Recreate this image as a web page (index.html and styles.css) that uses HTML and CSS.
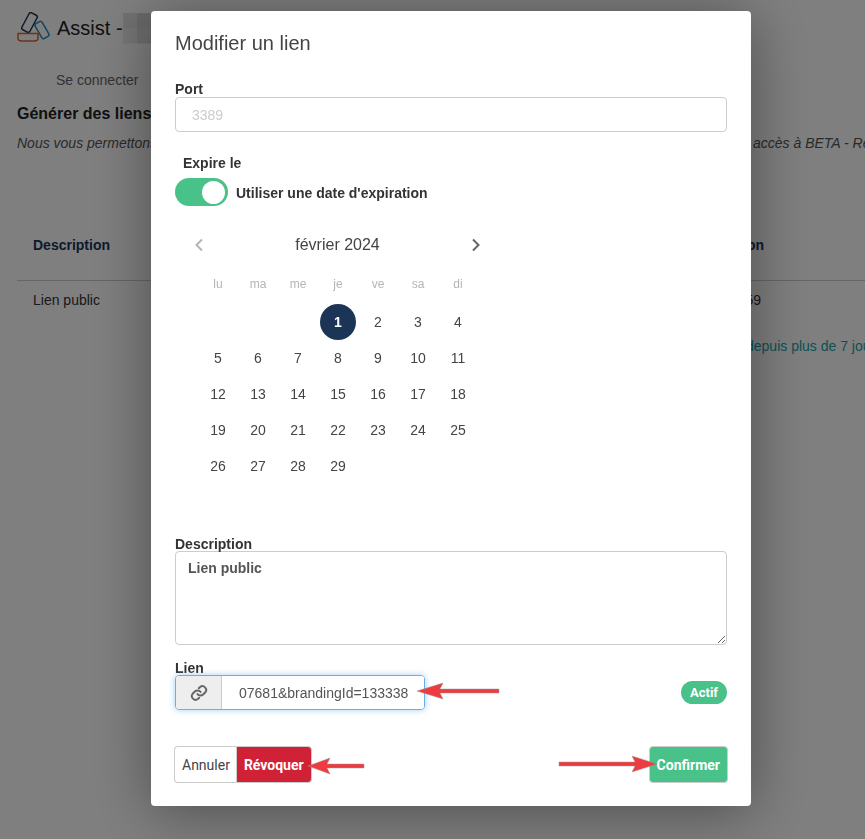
FILE: index.html
```html
<!DOCTYPE html>
<html lang="fr">
<head>
    <meta charset="UTF-8">
    <meta name="viewport" content="width=device-width, initial-scale=1.0">
    <title>Modifier un lien</title>
    <link rel="stylesheet" href="styles.css">
</head>
<body>
    <div class="page">
        <header class="brand">
            <svg class="logo" width="38" height="32" viewBox="0 0 38 32" fill="none">
                <rect x="8" y="1" width="9" height="19" rx="2" transform="rotate(28 12.5 10.5)" stroke="#1c3557" stroke-width="1.5"/>
                <rect x="21" y="9.5" width="8" height="17" rx="2" transform="rotate(-30 25 18)" stroke="#1a8fc4" stroke-width="1.5"/>
                <path d="M0.5 21.5H21.5M1 21.5V26C1 28 2.5 29 4.5 29H17.5C19.5 29 21 28 21 26V21.5" stroke="#d9662b" stroke-width="1.5"/>
            </svg>
            <span class="brand-name">Assist -</span>
            <span class="blur-blocks"></span>
        </header>
        <nav class="nav"><a>Se connecter</a></nav>
        <h1 class="page-title">Générer des liens</h1>
        <p class="page-intro"><span>Nous vous permettons</span><span>accès à BETA - Réservé</span></p>
        <div class="link-table">
            <div class="link-head">
                <span>Description</span>
                <span>Expiration</span>
            </div>
            <div class="link-row">
                <span>Lien public</span>
                <span class="link-date">16:59</span>
            </div>
            <div class="link-note">depuis plus de 7 jours</div>
        </div>
    </div>

    <div class="overlay">
        <div class="modal">
            <h2 class="modal-title">Modifier un lien</h2>

            <label class="field-label port-label" for="port">Port</label>
            <input class="text-input" type="text" id="port" placeholder="3389">

            <div class="expire-label">Expire le</div>
            <div class="switch-row">
                <span class="switch"><span class="switch-knob"></span></span>
                <span class="switch-text">Utiliser une date d'expiration</span>
            </div>

            <div class="calendar">
                <div class="cal-head">
                    <svg class="cal-prev" width="10" height="14" viewBox="0 0 10 14" fill="none"><path d="M8 1.5L2.5 7L8 12.5" stroke="#b4b4b4" stroke-width="2"/></svg>
                    <span class="cal-month">février 2024</span>
                    <svg class="cal-next" width="10" height="14" viewBox="0 0 10 14" fill="none"><path d="M2 1.5L7.5 7L2 12.5" stroke="#666" stroke-width="2"/></svg>
                </div>
                <div class="cal-grid cal-days">
                    <span>lu</span><span>ma</span><span>me</span><span>je</span><span>ve</span><span>sa</span><span>di</span>
                </div>
                <div class="cal-grid cal-dates">
                    <span></span><span></span><span></span><span class="is-selected">1</span><span>2</span><span>3</span><span>4</span>
                    <span>5</span><span>6</span><span>7</span><span>8</span><span>9</span><span>10</span><span>11</span>
                    <span>12</span><span>13</span><span>14</span><span>15</span><span>16</span><span>17</span><span>18</span>
                    <span>19</span><span>20</span><span>21</span><span>22</span><span>23</span><span>24</span><span>25</span>
                    <span>26</span><span>27</span><span>28</span><span>29</span>
                </div>
            </div>

            <label class="field-label desc-label" for="description">Description</label>
            <textarea class="text-area" id="description">Lien public</textarea>

            <label class="field-label link-label" for="link">Lien</label>
            <div class="link-line">
                <div class="input-group">
                    <span class="addon">
                        <svg width="18" height="18" viewBox="0 0 24 24" fill="none" stroke="#666" stroke-width="2.6" stroke-linecap="round">
                            <path d="M10 13.5a5 5 0 0 0 7.5.5l3-3a5 5 0 0 0-7-7l-1.7 1.7"/>
                            <path d="M14 10.5a5 5 0 0 0-7.5-.5l-3 3a5 5 0 0 0 7 7l1.7-1.7"/>
                        </svg>
                    </span>
                    <input class="link-input" type="text" id="link" value="07681&amp;brandingId=133338">
                </div>
                <span class="badge">Actif</span>
            </div>

            <div class="modal-actions">
                <div class="btn-group">
                    <button class="btn btn-cancel" type="button">Annuler</button>
                    <button class="btn btn-revoke" type="button">Révoquer</button>
                </div>
                <button class="btn btn-confirm" type="button">Confirmer</button>
            </div>

            <!-- annotations drawn on top of the screenshot -->
            <svg class="arrow arrow-link" width="84" height="20" viewBox="0 0 84 20"><path d="M83 8H24L27 2L1 10L27 18L24 12H83Z" fill="#ee3b3f" stroke="#999" stroke-width=".5"/></svg>
            <svg class="arrow arrow-revoke" width="58" height="20" viewBox="0 0 58 20"><path d="M57 8H20L23 2L1 10L23 18L20 12H57Z" fill="#ee3b3f" stroke="#999" stroke-width=".5"/></svg>
            <svg class="arrow arrow-confirm" width="100" height="20" viewBox="0 0 100 20"><path d="M1 8H77L74 2L99 10L74 18L77 12H1Z" fill="#ee3b3f" stroke="#999" stroke-width=".5"/></svg>
        </div>
    </div>
</body>
</html>
```

FILE: styles.css
```css
html, body {
    height: 100%;
}

body {
    margin: 0;
    font-family: "Liberation Sans", Arial, sans-serif;
    font-size: 14px;
    color: #333;
    background: #fff;
    overflow: hidden;
}

.page {
    padding: 12px 0 0 17px;
}

.brand {
    display: flex;
    align-items: center;
    height: 32px;
}

.logo {
    margin-right: 2px;
}

.brand-name {
    font-size: 20px;
    color: #222;
}

.blur-blocks {
    width: 28px;
    height: 31px;
    background:
        linear-gradient(90deg, #e4e4e4 50%, #d4d4d4 50%) top / 100% 50% no-repeat,
        linear-gradient(90deg, #ececec 50%, #dcdcdc 50%) bottom / 100% 50% no-repeat;
}

.nav {
    padding: 28px 0 0 39px;
    color: #666;
    line-height: 16px;
}

.page-title {
    margin: 17px 0 0;
    font-size: 16px;
    line-height: 18px;
    color: #222;
}

.page-intro {
    display: grid;
    grid-template-columns: 736px 1fr;
    margin: 12px 0 0;
    line-height: 16px;
    font-style: italic;
    white-space: nowrap;
    color: #555;
}

.link-table {
    margin-top: 86px;
    width: 848px;
}

.link-head,
.link-row {
    display: flex;
    justify-content: space-between;
    padding: 0 101px 0 16px;
}

.link-head {
    height: 43px;
    font-weight: bold;
    color: #1c3557;
    border-bottom: 1px solid #ccc;
}

.link-row {
    padding-top: 11px;
    line-height: 16px;
    color: #333;
}

.link-date {
    padding-right: 3px;
}

.link-note {
    margin: 30px 0 0 729px;
    line-height: 16px;
    white-space: nowrap;
    color: #17a2a8;
}

.overlay {
    position: fixed;
    top: 0;
    right: 0;
    bottom: 0;
    left: 0;
    background: rgba(0, 0, 0, 0.5);
}

.modal {
    position: absolute;
    top: 11px;
    left: 151px;
    width: 600px;
    height: 795px;
    box-sizing: border-box;
    padding: 20px 24px 0;
    background: #fff;
    border-radius: 4px;
    box-shadow: 0 5px 60px rgba(0, 0, 0, 0.4);
}

.modal-title {
    margin: 0;
    font-size: 20px;
    font-weight: 400;
    line-height: 24px;
    color: #444;
}

.field-label {
    display: block;
    margin-top: 27px;
    font-size: 14px;
    font-weight: 700;
    line-height: 16px;
    color: #333;
}

.port-label {
    line-height: 15px;
}

.text-input {
    display: block;
    box-sizing: border-box;
    width: 552px;
    height: 35px;
    padding: 0 16px;
    border: 1px solid #ccc;
    border-radius: 4px;
    font-family: "Liberation Sans", Arial, sans-serif;
    font-size: 14px;
    outline: none;
}

.text-input::placeholder {
    color: #ccc;
}

.expire-label {
    margin: 23px 0 0 8px;
    font-weight: 700;
    line-height: 16px;
}

.switch-row {
    display: flex;
    align-items: center;
    gap: 8px;
    margin-top: 7px;
}

.switch {
    display: flex;
    justify-content: flex-end;
    align-items: center;
    box-sizing: border-box;
    width: 53px;
    height: 28px;
    padding-right: 3px;
    background: #48c288;
    border-radius: 14px;
}

.switch-knob {
    width: 23px;
    height: 23px;
    background: #fff;
    border-radius: 50%;
}

.switch-text {
    padding-top: 2px;
    font-weight: 700;
    color: #333;
}

.calendar {
    width: 320px;
    margin: 0 0 0 23px;
}

.cal-head {
    display: flex;
    justify-content: space-between;
    align-items: center;
    width: 287px;
    height: 24px;
    margin: 27px 0 0 -4px;
    font-size: 16px;
    color: #444;
}

.cal-prev,
.cal-next {
    flex: none;
}

.cal-grid {
    display: grid;
    grid-template-columns: repeat(7, 40px);
}

.cal-days {
    margin-top: 19px;
    font-size: 12px;
    line-height: 16px;
    color: #b5b5b5;
    text-align: center;
}

.cal-dates {
    grid-auto-rows: 36px;
    margin-top: 12px;
    color: #444;
}

.cal-dates span {
    display: flex;
    justify-content: center;
    align-items: center;
}

.cal-dates .is-selected {
    width: 36px;
    margin: 0 2px;
    background: #1c3557;
    border-radius: 50%;
    color: #fff;
    font-weight: 700;
}

.desc-label {
    margin-top: 53px;
    line-height: 14px;
}

.text-area {
    display: block;
    box-sizing: border-box;
    width: 552px;
    height: 94px;
    padding: 7px 12px;
    border: 1px solid #ccc;
    border-radius: 4px;
    font-family: "Liberation Sans", Arial, sans-serif;
    font-size: 14px;
    font-weight: 700;
    line-height: 18px;
    color: #555;
    outline: none;
}

.link-label {
    margin-top: 16px;
    line-height: 14px;
}

.link-line {
    display: flex;
    justify-content: space-between;
    align-items: center;
    width: 552px;
}

.input-group {
    display: flex;
    box-sizing: border-box;
    width: 250px;
    height: 35px;
    border: 1px solid #66afe9;
    border-radius: 4px;
    box-shadow: 0 0 6px rgba(102, 175, 233, 0.6);
    overflow: hidden;
}

.addon {
    display: flex;
    justify-content: center;
    align-items: center;
    flex: none;
    width: 46px;
    background: #eee;
    border-right: 1px solid #ccc;
    box-sizing: border-box;
}

.link-input {
    flex: 1;
    min-width: 0;
    padding: 0 0 0 17px;
    border: 0;
    font-family: "Liberation Sans", Arial, sans-serif;
    font-size: 14px;
    color: #555;
    outline: none;
}

.badge {
    padding: 4px 9px;
    background: #48c288;
    border-radius: 12px;
    font-family: Roboto, sans-serif;
    font-size: 13px;
    font-weight: 700;
    line-height: 15px;
    color: #fff;
}

.modal-actions {
    display: flex;
    justify-content: space-between;
    align-items: center;
    width: 554px;
    margin: 36px 0 0 -1px;
}

.btn-group {
    display: flex;
}

.btn {
    height: 37px;
    padding: 0 7px;
    border: 1px solid #ccc;
    border-radius: 4px;
    font-family: Roboto, sans-serif;
    font-size: 14px;
    background: #fff;
    color: #444;
}

.btn-cancel {
    padding-right: 6px;
    border-radius: 4px 0 0 4px;
    border-right: 0;
}

.btn-revoke {
    border-radius: 0 4px 4px 0;
    background: #d12136;
    color: #fff;
    font-weight: 700;
}

.btn-confirm {
    background: #48c288;
    color: #fff;
    font-weight: 700;
}

.arrow {
    position: absolute;
}

.arrow-link {
    top: 670px;
    left: 265px;
}

.arrow-revoke {
    top: 745px;
    left: 156px;
}

.arrow-confirm {
    top: 743px;
    left: 407px;
}
```
